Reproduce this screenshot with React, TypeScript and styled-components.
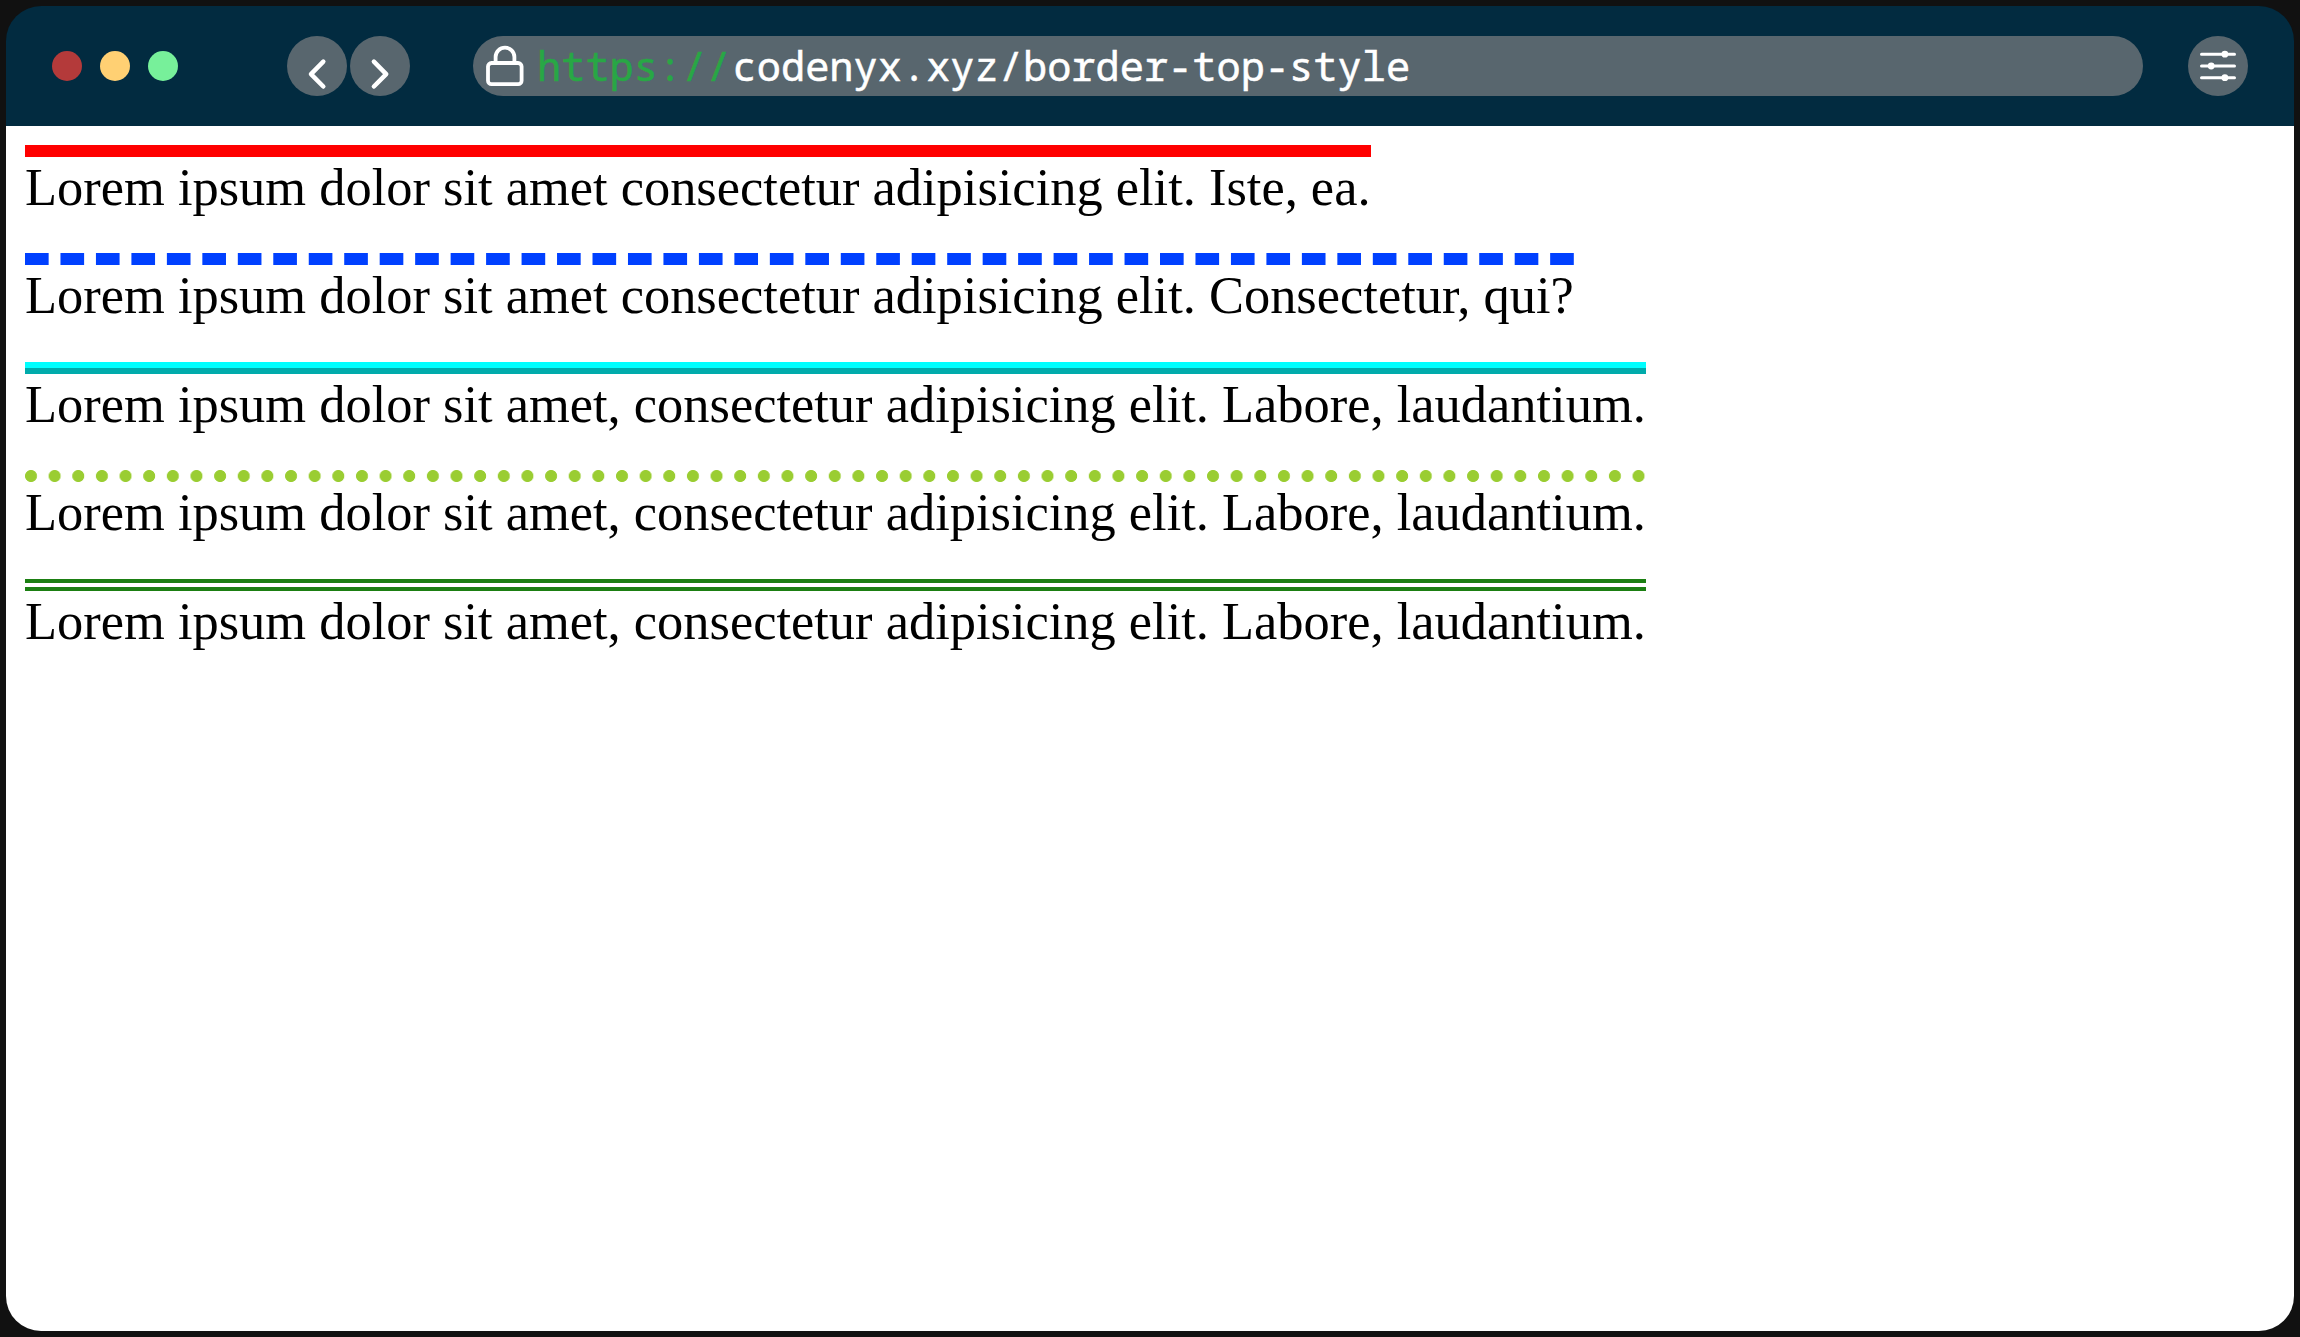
import React from "react";
import styled, { createGlobalStyle, css } from "styled-components";

const GlobalStyle = createGlobalStyle`
  * { box-sizing: border-box; }
  body { margin: 0; background: #111; }
`;

const Desktop = styled.div`
  height: 1337px;
  padding: 6px;
  display: flex;
`;

const BrowserWindow = styled.main`
  flex: 1;
  display: flex;
  flex-direction: column;
  border-radius: 35px;
  overflow: hidden;
`;

const Toolbar = styled.header`
  height: 120px;
  display: flex;
  align-items: center;
  padding: 0 46px;
  background: #022b40;
`;

const Lights = styled.div`
  display: flex;
  gap: 18px;
`;

const Light = styled.span<{ $color: string }>`
  width: 30px;
  height: 30px;
  border-radius: 50%;
  background: ${(p) => p.$color};
`;

const NavButtons = styled.nav`
  display: flex;
  gap: 3px;
  margin: 0 63px 0 109px;
`;

const RoundButton = styled.button`
  width: 60px;
  height: 60px;
  padding: 0;
  border: 0;
  border-radius: 50%;
  background: #58666e;
  color: #fff;
  display: grid;
  place-items: center;
`;

const AddressBar = styled.div`
  flex: 1;
  height: 60px;
  display: flex;
  align-items: center;
  padding-left: 12px;
  margin-right: 45px;
  border-radius: 30px;
  background: #58666e;
  color: #fff;
`;

const Url = styled.span`
  display: flex;
  gap: 2px;
  margin-left: 12px;
  font: 40.35px/60px "Noto Sans Mono", "Noto Mono", "DejaVu Sans Mono", monospace;
  -webkit-text-stroke: 0.5px currentColor;
  white-space: pre;
`;

const Scheme = styled.span`
  color: #28a745;
`;

const Page = styled.section`
  flex: 1;
  display: flex;
  flex-direction: column;
  align-items: flex-start;
  gap: 36.4px;
  padding: 19px;
  background: #fff;
`;

type Line = "solid" | "dashed" | "ridge" | "dotted" | "double";

const nativeLine = css<{ $line: Line; $color: string }>`
  border-top: 12px ${(p) => p.$line} ${(p) => p.$color};
`;

const dashedLine = css<{ $color: string }>`
  padding-top: 12px;
  background: linear-gradient(90deg, ${(p) => p.$color} 24px, transparent 24px) 0 0 / 35.47px 12px repeat-x;
`;

const dottedLine = css<{ $color: string }>`
  padding-top: 12px;
  background: radial-gradient(circle at 6px 6px, ${(p) => p.$color} 5.6px, transparent 6.4px) 0 0 / 23.65px 12px repeat-x;
`;

const Sample = styled.div<{ $line: Line; $color: string }>`
  ${(p) => (p.$line === "dashed" ? dashedLine : p.$line === "dotted" ? dottedLine : nativeLine)}
  font: 52.44px/60px "Liberation Serif", serif;
  color: #000;
  white-space: nowrap;
`;

const LockIcon = () => (
  <svg width="40" height="44" viewBox="0 0 40 44" fill="none" stroke="currentColor" strokeWidth="3.8">
    <rect x="3" y="19" width="33.6" height="21.2" rx="3.5" />
    <path d="M10.6 19v-5.9a9.4 9.4 0 0 1 18.8 0V19" />
  </svg>
);

const Chevron = ({ d }: { d: string }) => (
  <svg width="60" height="60" viewBox="0 0 60 60" fill="none" stroke="currentColor" strokeWidth="4.5" strokeLinecap="round" strokeLinejoin="round">
    <path d={d} />
  </svg>
);

const SlidersIcon = () => (
  <svg width="60" height="60" viewBox="0 0 60 60" stroke="currentColor" strokeWidth="3" strokeLinecap="round">
    <path d="M13.5 18.2h33M13.5 30h33M13.5 41.7h33" />
    <g fill="currentColor" stroke="none">
      <circle cx="36.9" cy="18.2" r="3.4" />
      <circle cx="23.2" cy="30" r="3.4" />
      <circle cx="36.9" cy="41.7" r="3.4" />
    </g>
  </svg>
);

const lights = ["#b43a3a", "#ffd073", "#77f09a"];

const samples: { line: Line; color: string; text: string }[] = [
  { line: "solid", color: "#ff0000", text: "Lorem ipsum dolor sit amet consectetur adipisicing elit. Iste, ea." },
  { line: "dashed", color: "#0040ff", text: "Lorem ipsum dolor sit amet consectetur adipisicing elit. Consectetur, qui?" },
  { line: "ridge", color: "#00ffff", text: "Lorem ipsum dolor sit amet, consectetur adipisicing elit. Labore, laudantium." },
  { line: "dotted", color: "#9acd32", text: "Lorem ipsum dolor sit amet, consectetur adipisicing elit. Labore, laudantium." },
  { line: "double", color: "#1b7f12", text: "Lorem ipsum dolor sit amet, consectetur adipisicing elit. Labore, laudantium." },
];

export default function App() {
  return (
    <Desktop>
      <GlobalStyle />
      <BrowserWindow>
        <Toolbar>
          <Lights>
            {lights.map((c) => (
              <Light key={c} $color={c} />
            ))}
          </Lights>
          <NavButtons>
            <RoundButton aria-label="Back">
              <Chevron d="M36.3 25.7 24 38.1 36.3 50.5" />
            </RoundButton>
            <RoundButton aria-label="Forward">
              <Chevron d="M23.9 25.7 36.2 38.1 23.9 50.5" />
            </RoundButton>
          </NavButtons>
          <AddressBar>
            <LockIcon />
            <Url>
              <Scheme>https://</Scheme>
              <span>codenyx.xyz/border-top-style</span>
            </Url>
          </AddressBar>
          <RoundButton aria-label="Settings">
            <SlidersIcon />
          </RoundButton>
        </Toolbar>
        <Page>
          {samples.map((s) => (
            <Sample key={s.line} $line={s.line} $color={s.color}>
              {s.text}
            </Sample>
          ))}
        </Page>
      </BrowserWindow>
    </Desktop>
  );
}
